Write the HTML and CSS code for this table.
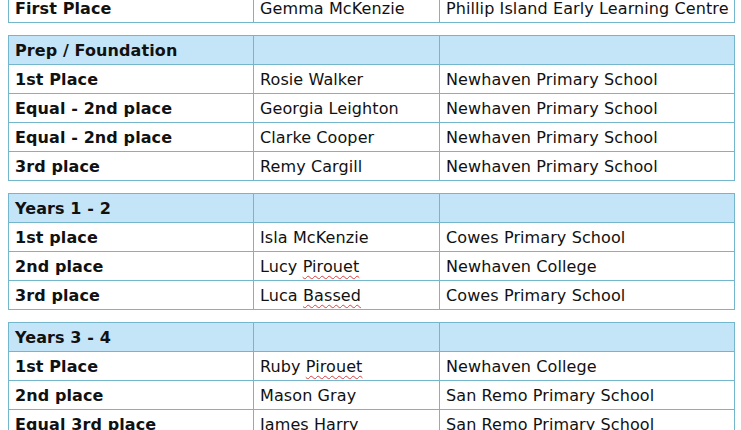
FILE: index.html
```html
<!DOCTYPE html>
<html>
<head>
<meta charset="utf-8">
<link rel="stylesheet" href="styles.css">
</head>
<body>
<div class="page">
  <table class="res">
    <tr><td class="c1">First Place</td><td class="c2">Gemma McKenzie</td><td class="c3">Phillip Island Early Learning Centre</td></tr>
  </table>
  <table class="res">
    <tr class="hd"><td class="c1">Prep / Foundation</td><td class="c2"></td><td class="c3"></td></tr>
    <tr><td class="c1">1st Place</td><td class="c2">Rosie Walker</td><td class="c3">Newhaven Primary School</td></tr>
    <tr><td class="c1">Equal - 2nd place</td><td class="c2">Georgia Leighton</td><td class="c3">Newhaven Primary School</td></tr>
    <tr><td class="c1">Equal - 2nd place</td><td class="c2">Clarke Cooper</td><td class="c3">Newhaven Primary School</td></tr>
    <tr><td class="c1">3rd place</td><td class="c2">Remy Cargill</td><td class="c3">Newhaven Primary School</td></tr>
  </table>
  <table class="res">
    <tr class="hd"><td class="c1">Years 1 - 2</td><td class="c2"></td><td class="c3"></td></tr>
    <tr><td class="c1">1st place</td><td class="c2">Isla McKenzie</td><td class="c3">Cowes Primary School</td></tr>
    <tr><td class="c1">2nd place</td><td class="c2">Lucy <span class="sp">Pirouet</span></td><td class="c3">Newhaven College</td></tr>
    <tr><td class="c1">3rd place</td><td class="c2">Luca <span class="sp">Bassed</span></td><td class="c3">Cowes Primary School</td></tr>
  </table>
  <table class="res">
    <tr class="hd"><td class="c1">Years 3 - 4</td><td class="c2"></td><td class="c3"></td></tr>
    <tr><td class="c1">1st Place</td><td class="c2">Ruby <span class="sp">Pirouet</span></td><td class="c3">Newhaven College</td></tr>
    <tr><td class="c1">2nd place</td><td class="c2">Mason Gray</td><td class="c3">San Remo Primary School</td></tr>
    <tr><td class="c1">Equal 3rd place</td><td class="c2">James Harry</td><td class="c3">San Remo Primary School</td></tr>
  </table>
</div>
</body>
</html>
```
FILE: styles.css
```css
html, body {
  margin: 0;
  padding: 0;
  background: #ffffff;
}
.page {
  margin-top: -7px;
  padding-left: 8px;
  font-family: "DejaVu Sans", Verdana, sans-serif;
  font-size: 16px;
  letter-spacing: 0.1px;
  color: #111111;
}
.res {
  border-collapse: collapse;
  width: 726px;
  table-layout: fixed;
  margin-bottom: 12px;
}
.res td {
  border: 1px solid #74b6cc;
  height: 29px;
  padding: 0 6px;
  box-sizing: border-box;
  white-space: nowrap;
  vertical-align: middle;
}
.c1 { width: 245px; font-weight: bold; }
.c2 { width: 186px; }
.c3 { width: 295px; }
.hd td { background: #c4e5f8; }
.sp {
  text-decoration: underline wavy #d84040;
  text-decoration-thickness: 1px;
  text-underline-offset: 3px;
}
```
